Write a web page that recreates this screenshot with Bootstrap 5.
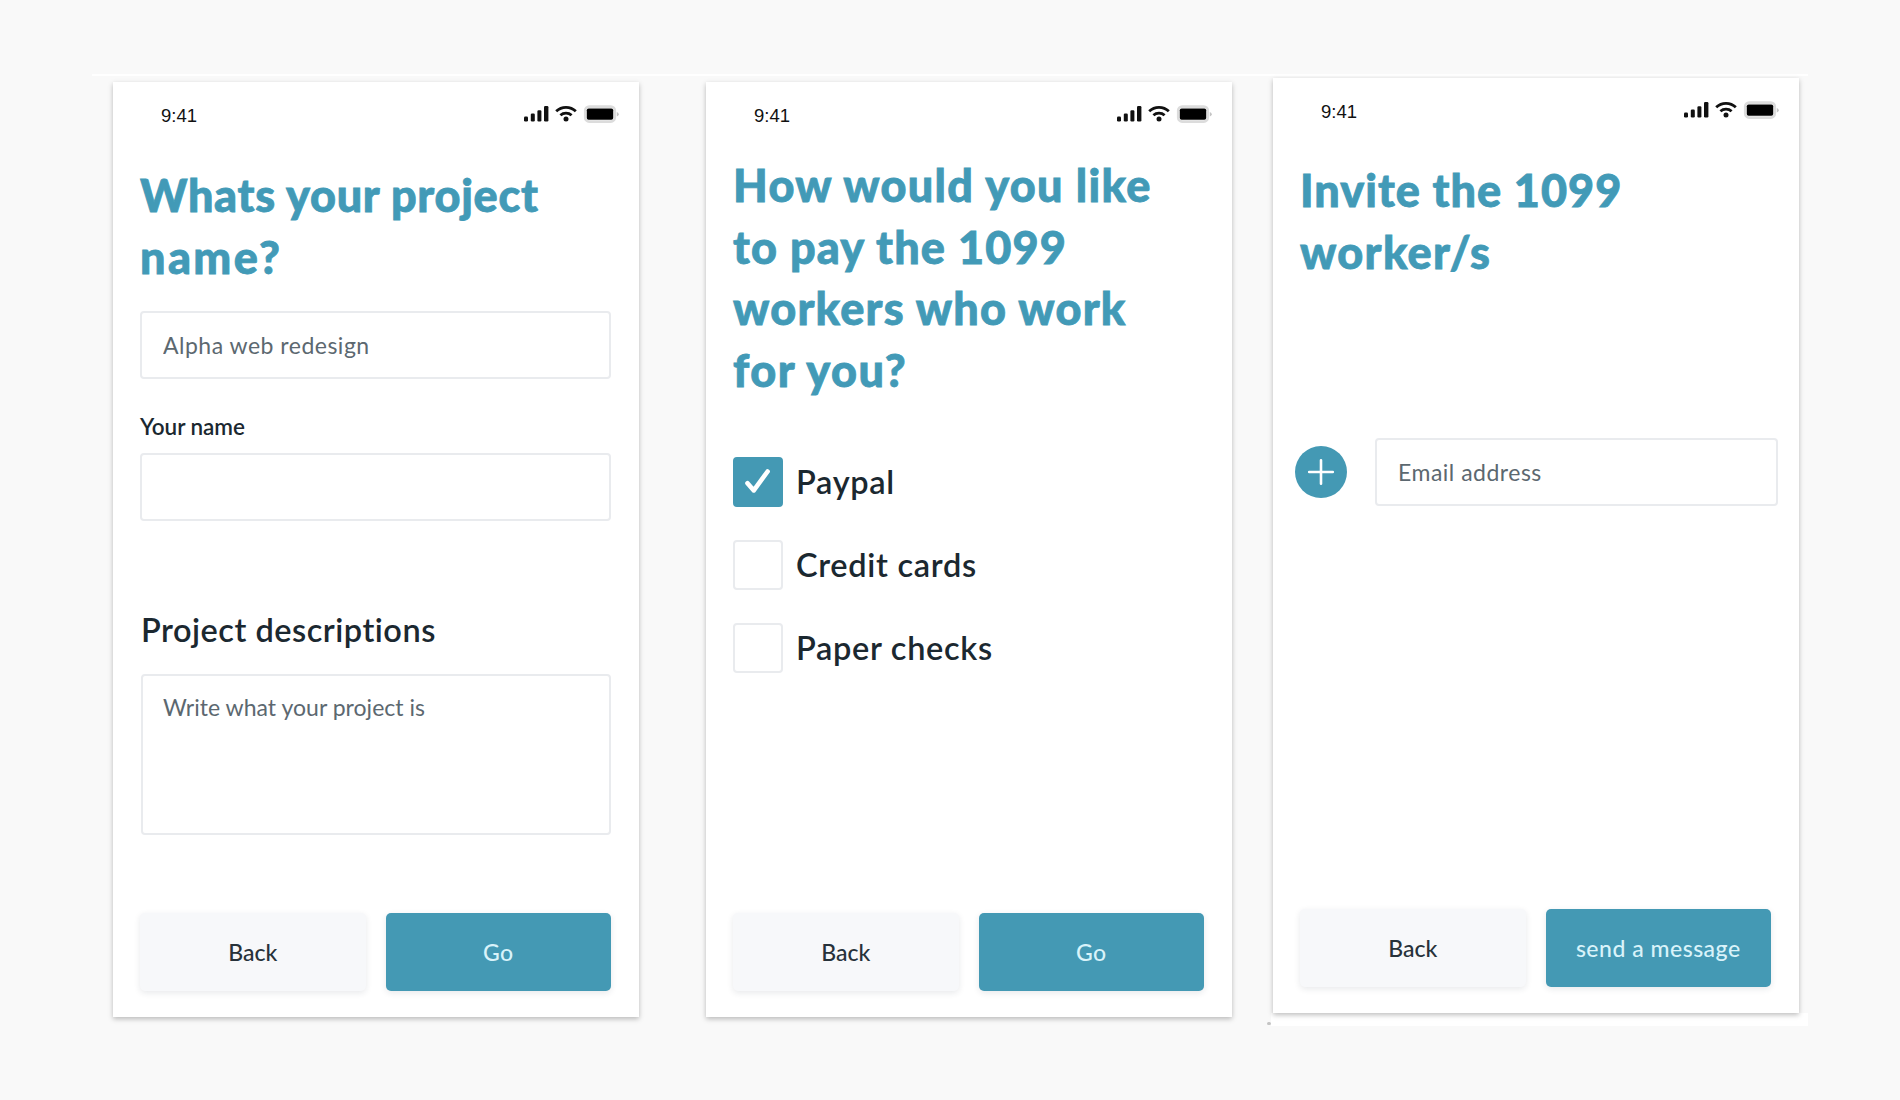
<!DOCTYPE html>
<html lang="en">
<head>
<meta charset="utf-8">
<meta name="viewport" content="width=device-width, initial-scale=1">
<title>Project setup</title>
<link href="https://cdn.jsdelivr.net/npm/bootstrap@5.3.0/dist/css/bootstrap.min.css" rel="stylesheet">
<style>
:root{--teal:#4499b4;--ink:#1b2830;--line:#e9ebee}
body{background:#f9f9f9;font-family:Lato,"Noto Sans",sans-serif;color:var(--ink);height:1100px;overflow:hidden}
.board{margin:74px 92px 0;border-top:2px solid #fff;padding-left:21px}
.phone{width:526px;height:935px;background:#fff;box-shadow:0 2px 5px rgba(0,0,0,.26);padding:0 28px 26px 27px;position:relative}
.slot-a{margin-top:6px;margin-right:67px}
.slot-b{margin-top:6px;margin-right:41px}
.slot-c{margin-top:2px}
.statusbar{height:73px;padding:22px 0 0 21px;margin-right:-10px;font:18.5px/24px "Liberation Sans",Arial,sans-serif;color:#111}
.statusbar svg{margin-right:2px}
.slot-c .statusbar{height:72px;padding-top:21.5px}
.title{font-size:45px;line-height:61.5px;font-weight:900;color:#429ab7;margin:0;white-space:nowrap;-webkit-text-stroke:.8px #429ab7}
.title span{display:block}
.title.low{margin-top:10px}
.field{height:68px;border:2px solid var(--line);border-radius:4px;padding:0 21px 1px;font-size:23px;line-height:28px;color:#5c6870;letter-spacing:.5px}
.field::placeholder{color:#5c6870;opacity:1}
textarea.field{height:161px;padding:17px 20px 0;resize:none;letter-spacing:.02px;margin-left:1px;width:470px}
.name-field{margin-top:23px}
.name-label{font-size:22.5px;line-height:28px;font-weight:600;letter-spacing:-.05px;margin:34px 0 12px}
.sub-label{font-size:32.5px;line-height:40px;font-weight:600;letter-spacing:.5px;margin:89px 0 24px 1px}
.actions{gap:20px;margin-top:auto}
.actions .btn{height:78px;border:0;border-radius:5px;font-size:23px;box-shadow:0 2px 6px rgba(30,40,60,.1);padding:0}
.btn-soft,.btn-soft:hover{background:#f7f8fa;color:#27323a;font-weight:500}
.btn-teal,.btn-teal:hover{background:var(--teal);color:#d9f3fa;letter-spacing:.5px;font-weight:500}
.options{margin-top:56px;gap:33px}
.option{gap:13px;font-size:32.5px;line-height:50px;font-weight:600;letter-spacing:.7px}
.option span{margin-top:0}
.tick{width:50px;height:50px;border:2px solid var(--line);border-radius:4px}
.tick.on{background:var(--teal);border-color:var(--teal)}
.invite{margin:155px -7px 0 -5px;gap:28px}
.plus{width:52px;height:52px;background:var(--teal);border:0;padding:0}
.strip{width:537px;height:13px;margin-left:-2px;background:#fff}
.speck{position:absolute;left:-6px;bottom:-12px;width:4px;height:3px;border-radius:2px;background:#c4c4c4}
</style>
</head>
<body>
<svg class="d-none">
  <symbol id="status" viewBox="0 0 96 20">
    <g fill="#111">
      <rect x="1" y="12.5" width="4" height="5" rx="1.2"/><rect x="7.8" y="9.5" width="4" height="8" rx="1.2"/><rect x="14.4" y="6.3" width="4" height="11.2" rx="1.2"/><rect x="21" y="2" width="4.4" height="15.5" rx="1.2"/>
      <circle cx="43" cy="15" r="2.5"/>
    </g>
    <g fill="none" stroke="#111" stroke-width="2.8"><path d="M33.2 7.2a14.2 14.2 0 0 1 19.6 0"/><path d="M37.4 11.3a8.4 8.4 0 0 1 11.2 0"/></g>
    <rect x="62.2" y="2.6" width="29.6" height="15" rx="4" fill="#fff" stroke="#dcdcdc" stroke-width="2.6"/>
    <rect x="63.8" y="4.5" width="26.4" height="11.2" rx="1.8" fill="#000"/>
    <path d="M93.8 8v4.4q2-.9 2-2.2t-2-2.2z" fill="#c4c4c4"/>
  </symbol>
</svg>

<main class="board d-flex align-items-start">
  <section class="phone slot-a d-flex flex-column flex-shrink-0">
    <div class="statusbar d-flex justify-content-between align-items-start"><span class="clock">9:41</span><svg width="96" height="20"><use href="#status"/></svg></div>
    <h1 class="title low"><span style="letter-spacing:.7px">Whats your project</span><span style="letter-spacing:2.4px">name?</span></h1>
    <input class="form-control field name-field" placeholder="Alpha web redesign" aria-label="Project name">
    <label class="name-label" for="yourname">Your name</label>
    <input class="form-control field" id="yourname">
    <label class="sub-label" for="desc">Project descriptions</label>
    <textarea class="form-control field" id="desc" placeholder="Write what your project is"></textarea>
    <div class="actions d-flex"><button class="btn btn-soft w-50">Back</button><button class="btn btn-teal w-50">Go</button></div>
  </section>

  <section class="phone slot-b d-flex flex-column flex-shrink-0">
    <div class="statusbar d-flex justify-content-between align-items-start"><span class="clock">9:41</span><svg width="96" height="20"><use href="#status"/></svg></div>
    <h1 class="title"><span style="letter-spacing:1.3px">How would you like</span><span style="letter-spacing:1.15px">to pay the 1099</span><span style="letter-spacing:1.2px">workers who work</span><span style="letter-spacing:1.5px">for you?</span></h1>
    <div class="options d-flex flex-column">
      <div class="option d-flex"><div class="tick on d-flex align-items-center justify-content-center"><svg class="flex-shrink-0" width="30" height="30" viewBox="0 0 30 30" fill="none" stroke="#fff" stroke-width="4.6" stroke-linecap="round" stroke-linejoin="round"><path d="M4.5 16.2l6.3 7.2L24.6 4.5"/></svg></div><span>Paypal</span></div>
      <div class="option d-flex"><div class="tick"></div><span>Credit cards</span></div>
      <div class="option d-flex"><div class="tick"></div><span>Paper checks</span></div>
    </div>
    <div class="actions d-flex"><button class="btn btn-soft w-50">Back</button><button class="btn btn-teal w-50">Go</button></div>
  </section>

  <div class="slot-c flex-shrink-0">
    <section class="phone d-flex flex-column">
      <div class="statusbar d-flex justify-content-between align-items-start"><span class="clock">9:41</span><svg width="96" height="20"><use href="#status"/></svg></div>
      <h1 class="title low"><span style="letter-spacing:1px">Invite the 1099</span><span style="letter-spacing:1.3px">worker/s</span></h1>
      <div class="invite d-flex align-items-center">
        <button class="plus rounded-circle flex-shrink-0 d-flex align-items-center justify-content-center" aria-label="Add"><svg width="28" height="28" viewBox="0 0 28 28" stroke="#fff" stroke-width="2.6" stroke-linecap="round"><path d="M14 2.2v23.6M2.2 14h23.6"/></svg></button>
        <input class="form-control field" placeholder="Email address" aria-label="Email address">
      </div>
      <div class="actions d-flex"><button class="btn btn-soft w-50">Back</button><button class="btn btn-teal w-50">send a message</button></div>
      <i class="speck"></i>
    </section>
    <div class="strip"></div>
  </div>
</main>
<script src="https://cdn.jsdelivr.net/npm/bootstrap@5.3.0/dist/js/bootstrap.bundle.min.js"></script>
</body>
</html>
